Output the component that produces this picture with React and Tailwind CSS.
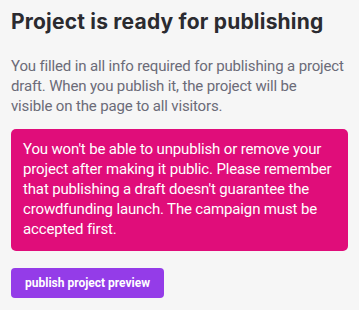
import React from "react";

const App = () => {
  return (
    <div className="min-h-screen w-full bg-[#f6f6f6] px-[11px] pt-[8px] font-['Roboto',sans-serif]">
      <h1 className="font-['Inter',sans-serif] text-[21px] font-bold leading-[28px] text-[#2b2b30] tracking-[0.2px]">
        Project is ready for publishing
      </h1>
      <p className="mt-[20px] text-[15px] leading-[20px] tracking-[-0.15px] text-[#6b6b78]">
        You filled in all info required for publishing a project draft. When
        you publish it, the project will be
        <br />
        visible on the page to all visitors.
      </p>
      <div className="mt-[13px] rounded-[5px] bg-[#e00d7a] px-[12px] pt-[10px] pb-[12px] text-[15px] leading-[20px] tracking-[-0.15px] text-white">
        You won't be able to unpublish or remove your project after making it
        public. Please remember that publishing a draft doesn't guarantee the
        crowdfunding launch. The campaign must be accepted first.
      </div>
      <button className="mt-[17px] h-[30px] rounded-[4px] bg-[#943ce8] px-[14px] text-[12px] font-bold text-white">
        publish project preview
      </button>
    </div>
  );
};

export default App;
